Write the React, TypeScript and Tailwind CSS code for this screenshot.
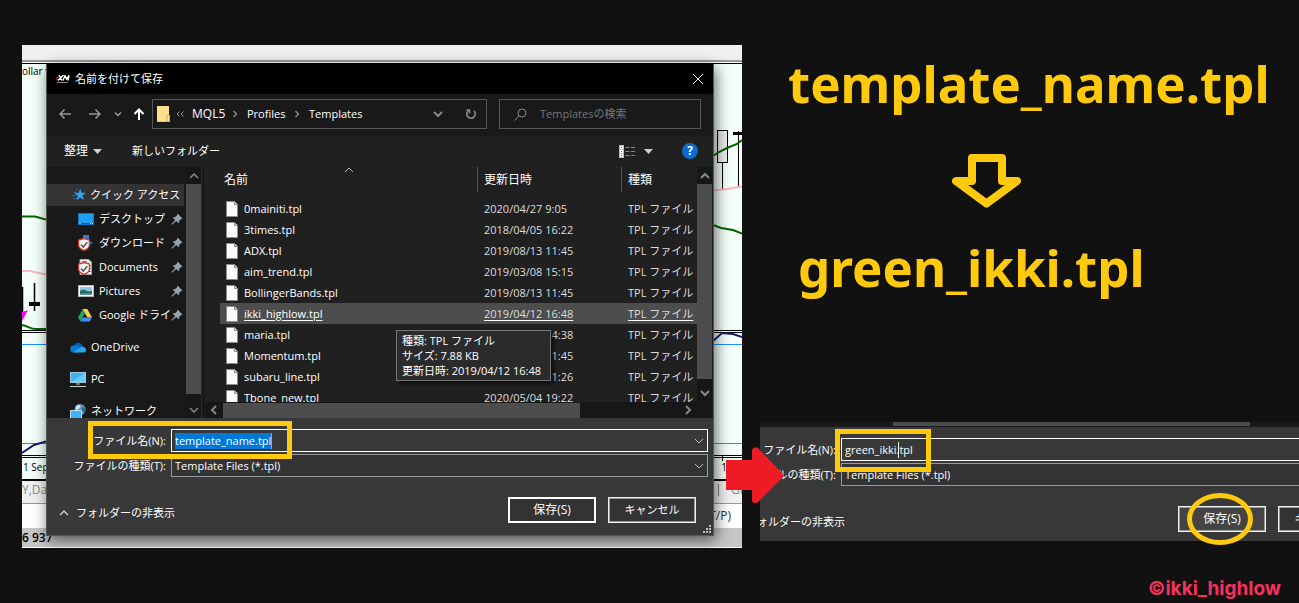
import type { ReactNode } from "react";

type FileRow = { name: string; date: string };

const files: FileRow[] = [
  { name: "0mainiti.tpl", date: "2020/04/27 9:05" },
  { name: "3times.tpl", date: "2018/04/05 16:22" },
  { name: "ADX.tpl", date: "2019/08/13 11:45" },
  { name: "aim_trend.tpl", date: "2019/03/08 15:15" },
  { name: "BollingerBands.tpl", date: "2019/08/13 11:45" },
  { name: "ikki_highlow.tpl", date: "2019/04/12 16:48" },
  { name: "maria.tpl", date: "2019/04/12 14:38" },
  { name: "Momentum.tpl", date: "2019/08/13 11:45" },
  { name: "subaru_line.tpl", date: "2019/08/13 11:26" },
  { name: "Tbone_new.tpl", date: "2020/05/04 19:22" },
];

function Chevron({ dir, className = "" }: { dir: "up" | "down" | "left" | "right"; className?: string }) {
  const paths = {
    up: "M1 7 5 3l4 4",
    down: "M1 3l4 4 4-4",
    left: "M7 1 3 5l4 4",
    right: "M3 1l4 4-4 4",
  };
  return (
    <svg viewBox="0 0 10 10" className={`size-[10px] shrink-0 ${className}`} fill="none" stroke="currentColor" aria-hidden="true">
      <path d={paths[dir]} />
    </svg>
  );
}

function Triangle() {
  return (
    <svg viewBox="0 0 9 5" className="h-[5px] w-[9px] shrink-0" aria-hidden="true">
      <path d="M0 0h9L4.500 5z" fill="#d0d0d0" />
    </svg>
  );
}

function Pin() {
  return (
    <svg viewBox="0 0 12 12" className="size-3 shrink-0" aria-hidden="true">
      <path d="M6.500.500 11.500 5.500 9.700 6.200 8.200 7.700 8 10.500 5.300 8 1 11.700 0.500 11 4.200 7 1.500 4.500 4.400 4 6 2.500z" fill="#9aa5ad" />
    </svg>
  );
}

function FileIcon() {
  return (
    <svg viewBox="0 0 12 16" className="h-4 w-3 shrink-0" aria-hidden="true">
      <path d="M.5.5h8l3 3v12H.5z" fill="#fafafa" stroke="#8c8c8c" />
      <path d="M8.500.500v3h3" fill="#ddd" stroke="#8c8c8c" />
    </svg>
  );
}

function StarIcon() {
  return (
    <svg viewBox="0 0 14 14" className="size-[14px]" aria-hidden="true">
      <path d="M8.200.800l1.500 4 4.200.1-3.300 2.700 1.200 4.500-3.600-2.500L4.500 12.200l1.200-4.500L2.500 5l4.200-.2z" fill="#2ea3f2" />
      <path d="M1.500 4.500h3M0 7.500h4M1 10.500h3.500M4 2h2" stroke="#1f6fb5" />
    </svg>
  );
}

function DesktopIcon() {
  return (
    <svg viewBox="0 0 16 12" className="h-3 w-4" aria-hidden="true">
      <rect x=".5" y=".5" width="15" height="11" fill="#1ea0f5" stroke="#1273c4" />
      <path d="M1 10.500h14" stroke="#0a5ca8" />
      <path d="M1.500 10.500h1M12 10.500h1M14 10.500h1" stroke="#fff" />
    </svg>
  );
}

function Shield() {
  return (
    <g>
      <path d="M6 3.500 11.500 5v4.500c0 3-2.500 5-5.500 6-3-1-5.500-3-5.500-6V5z" fill="#f4f4f4" stroke="#d23c28" strokeWidth="1.400" />
      <path d="M3 9.500 5.300 12l4-4.800" fill="none" stroke="#555" strokeWidth="1.500" />
    </g>
  );
}

function DownloadIcon() {
  return (
    <svg viewBox="0 0 15 16" className="h-4 w-[15px]" aria-hidden="true">
      <path d="M5 0h6v7h4l-7 7-6-7h3z" fill="#2f7bd0" />
      <Shield />
    </svg>
  );
}

function DocumentsIcon() {
  return (
    <svg viewBox="0 0 15 16" className="h-4 w-[15px]" aria-hidden="true">
      <path d="M2 .5h8.500L13.500 3v12.500H2z" fill="#f5f5f5" stroke="#aaa" />
      <path d="M4 2.500h5M11 6.500h2M11 9.500h2M11 12.500h2" stroke="#5c7fa8" />
      <Shield />
    </svg>
  );
}

function PicturesIcon() {
  return (
    <svg viewBox="0 0 16 12" className="h-3 w-4" aria-hidden="true">
      <rect x=".5" y=".5" width="15" height="11" fill="#fff" stroke="#b5b5b5" />
      <rect x="2" y="2" width="12" height="8" fill="#8fc7ea" />
      <path d="M2 6c3-2 5-1 7 0s4 0 5 0v4H2z" fill="#2c6b62" />
      <path d="M2 8.500h12V10H2z" fill="#5f93b3" />
    </svg>
  );
}

function DriveIcon() {
  return (
    <svg viewBox="0 0 14 13" className="h-[13px] w-[14px]" aria-hidden="true">
      <path d="M4.700 0 0 8.500 2.300 12.500 7 4.200z" fill="#1fa463" />
      <path d="M4.700 0h4.600L14 8.500H9.400z" fill="#ffd04b" />
      <path d="M4.700 8.500H14l-2.300 4H2.300z" fill="#4688f4" />
    </svg>
  );
}

function OneDriveIcon() {
  return (
    <svg viewBox="0 0 16 11" className="h-[11px] w-4" aria-hidden="true">
      <path d="M4 3.500A4.500 4.500 0 0 1 12 3l1 2-9 2z" fill="#0364b8" />
      <path d="M3.500 10.500A3.400 3.400 0 0 1 4 3.500c2.500-.500 4 1 6 2l-3 5z" fill="#0f78d4" />
      <path d="M3.500 10.500 10 5.500c3-2 6 0 6 2.500s-1.500 2.500-3 2.500z" fill="#28a8ea" />
    </svg>
  );
}

function PcIcon() {
  return (
    <svg viewBox="0 0 16 15" className="h-[15px] w-4" aria-hidden="true">
      <rect x=".5" y=".5" width="15" height="10" fill="#3fb3f5" stroke="#9cc9e0" />
      <path d="M1 10 15 1v9z" fill="#6cc9fb" />
      <path d="M6 12h4M0 14.500h16" stroke="#c8d0d4" />
    </svg>
  );
}

function NetworkIcon() {
  return (
    <svg viewBox="0 0 16 15" className="h-[15px] w-4" aria-hidden="true">
      <circle cx="10" cy="5.500" r="5.500" fill="#6a9fc0" />
      <path d="M6 2c3-2 5-1 4 1s-3 2-4 4z" fill="#cfe6f2" />
      <path d="M13 2c2 2 3 5 1 7l-3-3z" fill="#2f6c9a" />
      <rect x=".5" y="6.500" width="11" height="8" fill="#3fb3f5" stroke="#b5dcf0" />
    </svg>
  );
}

/* Lines of the trading chart left and right of the dialog */
function ChartLeft() {
  return (
    <svg viewBox="0 0 24 412" className="absolute left-0 top-0 h-[412px] w-6" fill="none" aria-hidden="true">
      <path d="M0 171.500h13l11 3" stroke="#006400" strokeWidth="2" />
      <path d="M0 226h8l16 3.500" stroke="#ffb6c1" strokeWidth="2" />
      <path d="M.5 242v25M12.500 238v28" stroke="#000" strokeWidth="1.500" />
      <path d="M7 259h11" stroke="#000" strokeWidth="4" />
      <path d="M0 267 6 265 0 276z" fill="#f0f" />
      <path d="M0 280c6 1 8 4 14 4h10" stroke="#006400" strokeWidth="2" />
      <path d="M0 285.500h24M0 287.500h24M0 410.500h24" stroke="#000" />
      <path d="M0 299.500h24M0 398.500h24" stroke="#1e90ff" />
      <path d="M0 408 12 400 24 396.500" stroke="#191970" strokeWidth="2" />
    </svg>
  );
}

function ChartRight() {
  return (
    <svg viewBox="0 0 29 434" className="absolute right-0 top-0 h-[434px] w-[29px]" fill="none" aria-hidden="true">
      <rect x="4.500" y="85.500" width="10" height="32" fill="#eee" stroke="#000" />
      <path d="M9.500 118v27M25.500 86v57M9.500 411v5" stroke="#000" />
      <path d="M20 88.500h9" stroke="#000" strokeWidth="3" />
      <path d="M0 111 6 107 14 103 24 99 29 95" stroke="#006400" strokeWidth="2" />
      <path d="M0 145.500 14 144 29 141.500" stroke="#ffb6c1" strokeWidth="2" />
      <path d="M0 180 8 183 20 185 29 188.500" stroke="#006400" strokeWidth="2" />
      <path d="M0 285.500h29M0 287.500h29M0 410.500h29" stroke="#000" />
      <path d="M0 296 9 288 20 289 29 292" stroke="#191970" strokeWidth="2" />
      <path d="M0 299.500h29M0 398.500h29" stroke="#1e90ff" />
    </svg>
  );
}

function TradingBackdrop() {
  return (
    <div className="absolute inset-0 flex flex-col overflow-hidden bg-[#f5fffa] leading-none text-black">
      <div className="h-[17px] shrink-0 border-b-2 border-[#999] bg-[#f0f0f0]" />
      <div className="h-px shrink-0 bg-white" />
      <div className="flex flex-1 items-start border-y border-black pt-[2px] text-[10px]">ollar v</div>
      <div className="flex h-[23px] shrink-0 items-center justify-between border-b-2 border-black pb-1 pl-px pr-[15px] text-[10px]">
        <span>1 Sep</span>
        <span>1</span>
      </div>
      <div className="flex h-[23px] shrink-0 items-center justify-between border-b border-[#999] bg-[#f0f0f0] pb-1 text-[12px] text-[#8a8a8a]">
        <span>Y,Dai</span>
        <span className="flex w-[24px] gap-3 overflow-hidden">
          <span className="border-l border-[#777]" />
          GBP
        </span>
      </div>
      <div className="flex h-6 shrink-0 items-center justify-end bg-white pr-[11px] text-[12px] text-[#333]">(T/P)</div>
      <div className="flex h-5 shrink-0 items-center border-b border-white bg-[#c6c6c6] text-[12px] font-semibold">6 937</div>
      <ChartLeft />
      <ChartRight />
    </div>
  );
}

function PlaceItem({ icon, label, pinned = false }: { icon: ReactNode; label: string; pinned?: boolean }) {
  return (
    <li className={pinned ? "flex h-6 items-center pl-[31px] pr-[3px]" : "flex h-8 items-center pl-[23px]"}>
      <a href="#" className="flex min-w-0 flex-1 items-center gap-[3px] overflow-hidden whitespace-nowrap">
        <span className="flex w-[18px] shrink-0 items-center">{icon}</span>
        {label}
      </a>
      {pinned && <Pin />}
    </li>
  );
}

function Sidebar() {
  return (
    <nav aria-label="場所" className="flex h-[251px] w-[154px] shrink-0 overflow-hidden bg-[#191919]">
      <ul className="min-w-0 flex-1 pt-[17px]">
        <li className="mb-px mr-[2px] flex h-[22px] items-center bg-[#333] pl-[25px]">
          <a href="#" className="flex items-center gap-1 whitespace-nowrap">
            <StarIcon />
            クイック アクセス
          </a>
        </li>
        <PlaceItem pinned icon={<DesktopIcon />} label="デスクトップ" />
        <PlaceItem pinned icon={<DownloadIcon />} label="ダウンロード" />
        <PlaceItem pinned icon={<DocumentsIcon />} label="Documents" />
        <PlaceItem pinned icon={<PicturesIcon />} label="Pictures" />
        <PlaceItem pinned icon={<DriveIcon />} label="Google ドライブ" />
        <li className="h-1" />
        <PlaceItem icon={<OneDriveIcon />} label="OneDrive" />
        <PlaceItem icon={<PcIcon />} label="PC" />
        <PlaceItem icon={<NetworkIcon />} label="ネットワーク" />
      </ul>
      <div className="flex w-[15px] flex-col items-center bg-[#171717] text-[#888]">
        <span className="flex h-[17px] items-center">
          <Chevron dir="up" className="stroke-[1.5]" />
        </span>
        <div className="mb-[11px] w-full flex-1 bg-[#4d4d4d]" />
        <Chevron dir="down" className="mb-[3px] stroke-[1.5]" />
      </div>
    </nav>
  );
}

function FileList() {
  return (
    <div className="relative flex min-w-0 flex-1 bg-[#202020] pr-px">
      <div className="flex min-w-0 flex-1 flex-col">
        <div className="h-[235px] overflow-hidden pl-[15px]">
          <table className="w-full table-fixed border-collapse text-left whitespace-nowrap">
            <colgroup>
              <col />
              <col className="w-[144px]" />
              <col className="w-[76px]" />
            </colgroup>
            <thead>
              <tr className="h-[31px] align-top text-[12px] leading-[26px]">
                <th className="relative pl-1 font-normal">
                  名前
                  <Chevron dir="up" className="absolute left-1/2 top-[-2px] -translate-x-1/2 text-[#bbb]" />
                </th>
                <th className="font-normal">
                  <div className="h-[25px] border-l border-[#555] pl-[6px]">更新日時</div>
                </th>
                <th className="font-normal">
                  <div className="h-[25px] border-l border-[#555] pl-[6px]">種類</div>
                </th>
              </tr>
            </thead>
            <tbody>
              {files.map((f) => {
                const active = f.name === "ikki_highlow.tpl";
                return (
                  <tr key={f.name} className={active ? "h-[21px] bg-[#4d4d4d] underline underline-offset-2" : "h-[21px]"}>
                    <td className="p-0 pl-[6px]">
                      <div className="flex h-[21px] items-center gap-[6px]">
                        <FileIcon />
                        <span>{f.name}</span>
                      </div>
                    </td>
                    <td className="p-0 pl-[7px] text-[#ddd]">{f.date}</td>
                    <td className="p-0 pl-[7px] text-[#ddd]">TPL ファイル</td>
                  </tr>
                );
              })}
            </tbody>
          </table>
        </div>
        <div className="flex h-4 items-center bg-[#171717] text-[#888]">
          <Chevron dir="left" className="mx-1 stroke-2" />
          <div className="h-[15px] w-[357px] bg-[#4d4d4d]" />
          <Chevron dir="right" className="ml-auto mr-1 stroke-2" />
        </div>
      </div>
      <div className="flex w-[15px] flex-col items-center bg-[#171717] text-[#888]">
        <span className="flex h-[17px] items-center">
          <Chevron dir="up" className="stroke-2" />
        </span>
        <div className="mb-[9px] w-full flex-1 bg-[#4d4d4d]" />
        <Chevron dir="down" className="mb-5 stroke-2" />
      </div>
      <div
        role="tooltip"
        className="absolute left-[191px] top-[163px] w-[155px] whitespace-nowrap border border-[#767676] bg-[#2b2b2b] px-[5px] py-[2px] leading-[15px] text-white shadow-[3px_3px_3px_#0008]"
      >
        種類: TPL ファイル
        <br />
        サイズ: 7.88 KB
        <br />
        更新日時: 2019/04/12 16:48
      </div>
    </div>
  );
}

function SaveFooter({ id, step }: { id: string; step: "before" | "after" }) {
  const before = step === "before";
  return (
    <form className="relative h-[117px] bg-[#383838]" onSubmit={(e) => e.preventDefault()}>
      <div className="grid grid-cols-[119px_1fr] items-center gap-x-[5px] gap-y-[2px] pr-[5px] pt-[11px]">
        <label htmlFor={`${id}-name`} className="justify-self-end whitespace-nowrap">
          ファイル名(N):
        </label>
        <div className="flex h-[23px] items-center justify-between border border-white bg-[#383838] pl-[3px] pr-[3px]">
          <div className="relative flex">
            <input
              id={`${id}-name`}
              type="text"
              defaultValue={before ? "template_name.tpl" : "green_ikki.tpl"}
              className={
                before
                  ? "field-sizing-content h-4 border-r border-[#ff8a1c] bg-[#0078d7] leading-4 text-white outline-none"
                  : "field-sizing-content h-4 bg-transparent leading-4 text-white outline-none"
              }
            />
            {!before && <span className="absolute left-[53px] top-0 h-4 w-px bg-white" />}
          </div>
          <Chevron dir="down" className="text-[#bbb]" />
        </div>
        <label htmlFor={`${id}-type`} className="justify-self-end whitespace-nowrap">
          ファイルの種類(T):
        </label>
        <div className="relative">
          <select
            id={`${id}-type`}
            className="block h-[23px] w-full appearance-none border border-[#999] bg-[#333] pl-[3px] text-white outline-none"
          >
            <option>Template Files (*.tpl)</option>
          </select>
          <Chevron dir="down" className="pointer-events-none absolute right-1 top-[7px] text-[#bbb]" />
        </div>
      </div>
      <div className="mt-5 flex items-center pl-3 pr-[17px]">
        <button type="button" className="mt-[6px] flex items-center gap-[7px] whitespace-nowrap">
          <Chevron dir="up" className="stroke-[1.5] text-[#ccc]" />
          フォルダーの非表示
        </button>
        <div className="ml-auto flex gap-3">
          <button
            type="submit"
            className={
              before
                ? "h-[26px] w-[88px] border-2 border-white bg-[#333] text-[12px]"
                : "h-[26px] w-[88px] border border-[#f0f0f0] bg-[#444] text-[12px] shadow-[inset_0_0_0_1px_#999]"
            }
          >
            保存(S)
          </button>
          <button type="button" className="h-[26px] w-[88px] border border-[#f0f0f0] bg-[#333] shadow-[inset_0_0_0_1px_#999]">
            キャンセル
          </button>
        </div>
      </div>
      <svg viewBox="0 0 8 8" className="absolute bottom-[2px] right-[2px] size-2" fill="#bbb" aria-hidden="true">
        <path d="M0 6h2v2H0zM3 6h2v2H3zM6 6h2v2H6zM3 3h2v2H3zM6 3h2v2H6zM6 0h2v2H6z" />
      </svg>
      <div
        className={
          before
            ? "pointer-events-none absolute left-[41px] top-[3px] h-[38px] w-[204px] border-5 border-[#ffc90e]"
            : "pointer-events-none absolute left-[118px] top-[2px] h-[43px] w-[96px] border-5 border-[#ffc90e]"
        }
      />
    </form>
  );
}

function SaveDialog() {
  return (
    <section
      aria-label="名前を付けて保存"
      className="relative ml-6 mr-7 border border-t-0 border-[#555] bg-[#191919] text-white shadow-[2px_4px_14px_#0009]"
    >
      <header className="mt-px flex h-[30px] items-center bg-black pl-[9px] pr-[10px]">
        <svg viewBox="0 0 14 8" className="mr-[5px] h-2 w-[14px]" aria-hidden="true">
          <path d="M0 3l3-1M0 5l3-1" stroke="#e02020" fill="none" />
          <path d="M3 0l3 5.500M7.500 0 2 5.500M7 5.500 9 .500l1.500 3.500L13 .500 12 5.500" fill="none" stroke="#fff" strokeWidth="1.400" />
          <path d="M1 7.500h11" stroke="#888" />
        </svg>
        <h2>名前を付けて保存</h2>
        <button type="button" aria-label="閉じる" className="ml-auto">
          <svg viewBox="0 0 10 10" className="size-[10px]" stroke="#fff" aria-hidden="true">
            <path d="M0 0l10 10M10 0 0 10" />
          </svg>
        </button>
      </header>

      <div className="flex h-[42px] items-center pb-[2px] pl-3 pr-3">
        <div className="flex w-[93px] items-center text-[#999]">
          <svg viewBox="0 0 12 12" className="size-3" fill="none" stroke="currentColor" strokeWidth="1.500" aria-hidden="true">
            <path d="M12 6H1M5.500 1.500 1 6l4.500 4.500" />
          </svg>
          <svg viewBox="0 0 12 12" className="ml-[18px] size-3" fill="none" stroke="currentColor" strokeWidth="1.500" aria-hidden="true">
            <path d="M0 6h11M6.500 1.500 11 6l-4.500 4.500" />
          </svg>
          <svg viewBox="0 0 8 8" className="ml-[13px] size-2" fill="none" stroke="currentColor" strokeWidth="1.500" aria-hidden="true">
            <path d="M1 2.500l3 3 3-3" />
          </svg>
          <svg viewBox="0 0 12 12" className="ml-[11px] size-3" fill="none" stroke="#fff" strokeWidth="2" aria-hidden="true">
            <path d="M6 12V1.500M1.500 6 6 1.500 10.500 6" />
          </svg>
        </div>
        <div className="flex h-[30px] min-w-0 flex-1 items-center border border-[#555] pl-1 pr-[9px] text-[12px]">
          <svg viewBox="0 0 13 16" className="mr-[6px] h-4 w-[13px] shrink-0" aria-hidden="true">
            <path d="M0 0h12v9h1v7H0z" fill="#ffe08a" />
            <path d="M10 15.500V9.500h2.500v6z" fill="#ffe9a8" stroke="#e0a92e" />
            <path d="M0 15.500h10" stroke="#f0c75a" />
          </svg>
          <svg viewBox="0 0 8 6" className="mr-2 h-[6px] w-2" fill="none" stroke="#999" aria-hidden="true">
            <path d="M3.500.500 1 3l2.500 2.500M7.500.500 5 3l2.500 2.500" />
          </svg>
          <a href="#" className="w-[38px]">MQL5</a>
          <svg viewBox="0 0 10 10" className="mr-[7px] size-[10px]" fill="none" stroke="#888" strokeWidth="1.500" aria-hidden="true">
            <path d="M3.500 2l3 3-3 3" />
          </svg>
          <a href="#" className="w-[45px] text-[11px]">Profiles</a>
          <svg viewBox="0 0 10 10" className="mr-[7px] size-[10px]" fill="none" stroke="#888" strokeWidth="1.500" aria-hidden="true">
            <path d="M3.500 2l3 3-3 3" />
          </svg>
          <a href="#" className="text-[11px]">Templates</a>
          <Chevron dir="down" className="ml-auto mr-[22px] stroke-2 text-[#888]" />
          <svg viewBox="0 0 12 12" className="size-3" fill="none" stroke="#888" strokeWidth="1.600" aria-hidden="true">
            <path d="M3 2.800a4.300 4.300 0 1 0 6 0M1.500 2h3v3.500" />
          </svg>
        </div>
        <label className="ml-3 flex h-[30px] w-[202px] items-center border border-[#555] pl-[14px]">
          <svg viewBox="0 0 13 13" className="mr-[13px] size-[13px] shrink-0" fill="none" stroke="#888" aria-hidden="true">
            <circle cx="8" cy="5" r="4" />
            <path d="M5 8 .5 12.500" />
          </svg>
          <input type="search" aria-label="検索" placeholder="Templatesの検索" className="min-w-0 flex-1 bg-transparent outline-none placeholder:text-[#777]" />
        </label>
      </div>

      <div className="flex h-[31px] items-center bg-[#202020] pb-px pl-[17px] pr-[15px]">
        <button type="button" className="flex items-center gap-[5px] text-[12px]">
          整理
          <Triangle />
        </button>
        <button type="button" className="ml-[30px]">新しいフォルダー</button>
        <button type="button" aria-label="表示" className="ml-auto flex items-center gap-2">
          <svg viewBox="0 0 17 13" className="h-[13px] w-[17px]" aria-hidden="true">
            <path d="M0 0h5v13H0z" fill="#bbb" />
            <path d="M1 1h3v3H1zM1 5h3v3H1zM1 9h3v3H1z" fill="#fff" />
            <path d="M2 2.500h1M2 6.500h1" stroke="#27c" />
            <path d="M2 10.500h1" stroke="#c22" />
            <path d="M6.500 2.500h4M12 2.500h4M6.500 6.500h4M12 6.500h4M6.500 10.500h4M12 10.500h4" stroke="#888" />
          </svg>
          <Triangle />
        </button>
        <button type="button" aria-label="ヘルプ" className="ml-[29px] flex size-4 items-center justify-center rounded-full bg-[#0a6cce] text-[12px] font-bold leading-none">
          ?
        </button>
      </div>

      <div className="flex">
        <Sidebar />
        <div className="w-1 border-l border-[#2a2a2a] bg-[#191919]" />
        <FileList />
      </div>
      <SaveFooter id="old" step="before" />
    </section>
  );
}

export default function App() {
  return (
    <main className="grid min-h-screen grid-cols-[720fr_539fr] items-start gap-x-[18px] overflow-hidden bg-[#111] pl-[22px] font-['Open_Sans','Noto_Sans_CJK_JP',sans-serif] text-[11px] leading-4 text-white">
      <div className="relative mt-[45px] pb-[12px] pt-[18px]">
        <TradingBackdrop />
        <SaveDialog />
      </div>

      <div className="flex min-w-0 flex-col pt-[53px]">
        <p className="pl-[28px] font-['Noto_Sans',sans-serif] text-[51px] font-bold leading-[60px] text-[#ffc90e]">template_name.tpl</p>
        <svg viewBox="0 0 69 54" className="ml-[192px] mt-[41px] h-[54px] w-[69px]" fill="none" stroke="#ffc90e" strokeWidth="8" strokeLinejoin="round" aria-hidden="true">
          <path d="M20 4h30v23h15L34.500 49.500 4 27h16z" />
        </svg>
        <p className="mt-[29px] pl-[38px] font-['Noto_Sans',sans-serif] text-[51px] font-bold leading-[60px] text-[#ffc90e]">green_ikki.tpl</p>

        <div className="relative mt-[125px]">
          <div className="h-[119px] overflow-hidden">
            <div className="-ml-[43px] w-[666px]">
              <div className="flex h-[5px] justify-start bg-[#191919] pl-[176px]">
                <div className="h-1 w-[357px] bg-[#4d4d4d]" />
              </div>
              <SaveFooter id="new" step="after" />
            </div>
          </div>
          <div className="pointer-events-none absolute right-[46px] top-[71px] h-[52px] w-[66px] rounded-[50%] border-5 border-[#ffc90e]" />
          <svg viewBox="0 0 58 56" className="absolute left-[-34px] top-[25px] h-14 w-[58px]" fill="#ed1c24" aria-hidden="true">
            <path d="M0 13h26V3q2-4 6-2l24 25q3 3 0 5L32 55q-4 3-6-1V43H0z" />
          </svg>
        </div>

        <p className="mt-[38px] self-end pr-[18px] font-['Inter',sans-serif] text-[19px] font-bold leading-5 text-[#f5315f]">©ikki_highlow</p>
      </div>
    </main>
  );
}
